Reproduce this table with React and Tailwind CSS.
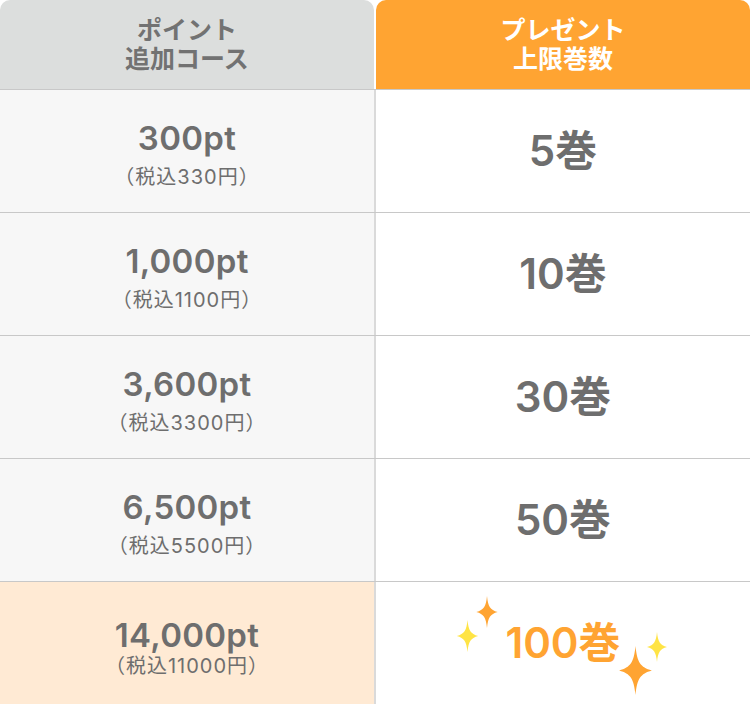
import { Fragment } from 'react'

const rows = [
  { pt: '300pt', price: '（税込330円）', vol: '5巻' },
  { pt: '1,000pt', price: '（税込1100円）', vol: '10巻' },
  { pt: '3,600pt', price: '（税込3300円）', vol: '30巻' },
  { pt: '6,500pt', price: '（税込5500円）', vol: '50巻' },
  { pt: '14,000pt', price: '（税込11000円）', vol: '100巻', best: true },
]

function Sparkle({ className, color }) {
  return (
    <svg viewBox="0 0 20 30" className={className} fill={color}>
      <path d="M10 0 C11 10 13 13 20 15 C13 17 11 20 10 30 C9 20 7 17 0 15 C7 13 9 10 10 0 Z" />
    </svg>
  )
}

export default function App() {
  return (
    <div
      className="w-[750px] h-[705px] bg-white text-[#6e6e6e]"
      style={{ fontFamily: 'Inter, "Noto Sans CJK JP", sans-serif' }}
    >
      <div className="flex h-[89px]">
        <div className="w-[374px] rounded-t-[10px] bg-[#dcdedd] flex flex-col items-center justify-center text-[25px] font-bold leading-[29px] text-[#727272]">
          <span>ポイント</span>
          <span>追加コース</span>
        </div>
        <div className="w-[2px]" />
        <div className="flex-1 rounded-t-[10px] bg-[#ffa432] flex flex-col items-center justify-center text-[25px] font-bold leading-[29px] text-white">
          <span>プレゼント</span>
          <span>上限巻数</span>
        </div>
      </div>
      {rows.map((r) => (
        <Fragment key={r.pt}>
          <div className="h-px bg-[#c8c8c8]" />
          <div className="flex h-[122px]">
            <div
              className={`w-[374px] flex flex-col items-center justify-center ${r.best ? 'bg-[#ffead4] pt-[10px]' : 'bg-[#f7f7f7] pt-[8px]'}`}
            >
              <span className="text-[33px] font-semibold leading-[34px] tracking-[0.3px]">{r.pt}</span>
              <span className={`text-[20px] leading-[26px] tracking-[1px] ${r.best ? 'mt-[1px]' : 'mt-[9px]'}`}>{r.price}</span>
            </div>
            <div className="w-[2px] bg-[#dadada]" />
            <div className="relative flex-1 flex items-center justify-center">
              {r.best ? (
                <>
                  <span className="text-[42px] font-semibold text-[#ffa432] leading-none">{r.vol}</span>
                  <Sparkle className="absolute left-[100px] top-[14px] w-[22px] h-[32px]" color="#ffa432" />
                  <Sparkle className="absolute left-[80px] top-[38px] w-[23px] h-[32px]" color="#ffe445" />
                  <Sparkle className="absolute left-[270px] top-[50px] w-[22px] h-[30px]" color="#ffe445" />
                  <Sparkle className="absolute left-[242px] top-[64px] w-[35px] h-[49px]" color="#ffa432" />
                </>
              ) : (
                <span className="text-[42px] font-semibold leading-none">{r.vol}</span>
              )}
            </div>
          </div>
        </Fragment>
      ))}
    </div>
  )
}
